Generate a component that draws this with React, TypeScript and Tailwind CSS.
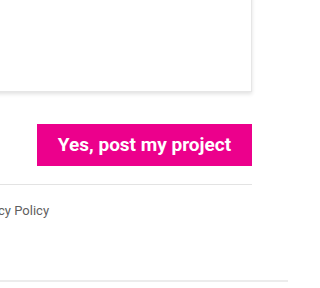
export default function App() {
  return (
    <div className="w-[288px] h-[288px] overflow-hidden bg-white" style={{ fontFamily: "Roboto, 'Liberation Sans', sans-serif" }}>
      <div className="ml-[-48px] w-[300px] flex flex-col">
        <div className="h-[102px] mt-[-10px] bg-white border border-[#e6e6e6] shadow-[0_2px_4px_rgba(0,0,0,0.12)]"></div>
        <div className="flex justify-end mt-[32px]">
          <button className="w-[215px] h-[42px] bg-[#ec008c] text-white font-bold text-[19px] flex items-center justify-center">
            Yes, post my project
          </button>
        </div>
        <div className="mt-[18px] border-t border-[#e3e3e3]"></div>
        <div className="mt-[17px] pl-[17px] text-[13px] text-[#5f5f5f] leading-[18px]">Privacy Policy</div>
      </div>
      <div className="mt-[60px] h-[2px] bg-[#ececec]"></div>
    </div>
  );
}
